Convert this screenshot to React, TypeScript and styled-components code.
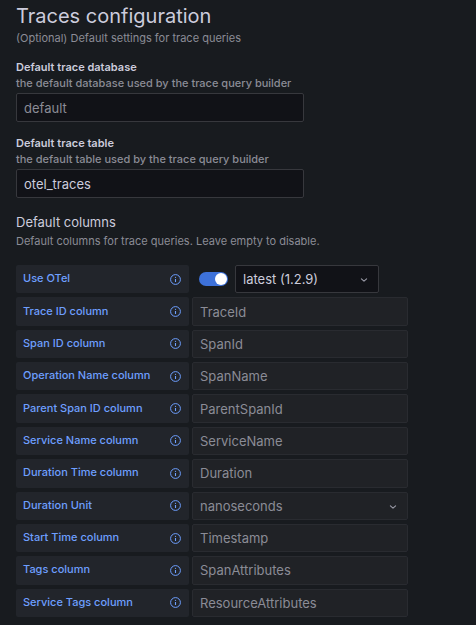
import React, { useState } from "react";
import styled, { createGlobalStyle } from "styled-components";

const color = {
  page: "#181b1f",
  field: "#111217",
  disabled: "#202226",
  label: "#22252b",
  border: "#37383d",
  faintBorder: "#292b30",
  text: "#ccccdc",
  muted: "#8b8c96",
  link: "#6e9fff",
  primary: "#3d71d9",
};

const GlobalStyle = createGlobalStyle`
  *, *::before, *::after { box-sizing: border-box; }
  body {
    margin: 0;
    background: ${color.page};
    color: ${color.text};
    font-family: Inter, "Liberation Sans", sans-serif;
    font-size: 13px;
  }
  input, select, button { font: inherit; color: inherit; margin: 0; }
`;

const Page = styled.main`
  padding: 4px 16px 8px;
`;

const Title = styled.h3`
  margin: 0;
  font-size: 20px;
  line-height: 24px;
  font-weight: 400;
`;

const Subtitle = styled.h4`
  margin: 0;
  font-size: 13px;
  line-height: 17px;
  font-weight: 400;
`;

const Description = styled.p`
  margin: 0;
  padding-top: 2px;
  font-size: 11px;
  line-height: 16px;
  color: ${color.muted};
`;

const Section = styled.section`
  margin-top: 16px;
`;

const Field = styled.div`
  display: flex;
  flex-direction: column;
  max-width: 288px;
  margin-top: 13px;
`;

const FieldLabel = styled.label`
  font-size: 11px;
  line-height: 16px;
  font-weight: 600;
`;

const FieldHint = styled.span`
  margin-bottom: 2px;
  font-size: 11px;
  line-height: 16px;
  font-weight: 500;
  color: ${color.muted};
`;

const TextInput = styled.input`
  width: 100%;
  height: 29px;
  padding: 0 7px;
  border: 1px solid ${color.border};
  border-radius: 2px;
  outline: none;
  background: ${color.field};

  &::placeholder { color: ${color.muted}; opacity: 1; }
  &:focus { border-color: ${color.primary}; }
  &:disabled {
    height: 100%;
    border-color: ${color.faintBorder};
    background: ${color.disabled};
  }
`;

const Columns = styled.div`
  display: grid;
  grid-auto-rows: 1fr;
  gap: 4px;
  max-width: 392px;
  min-height: 352px;
  margin-top: 16px;
`;

const Row = styled.div`
  display: grid;
  grid-template-columns: 173px minmax(0, 1fr);
  gap: 3px;
`;

const RowLabel = styled.label`
  display: flex;
  align-items: center;
  justify-content: space-between;
  padding: 0 8px 0 7px;
  border-radius: 2px;
  background: ${color.label};
  color: ${color.link};
  font-size: 11px;
  line-height: 16px;
  font-weight: 500;
`;

const LabelText = styled.span`
  padding-bottom: 2px;
`;

const InfoIcon = styled.svg`
  flex: none;
  width: 11px;
  height: 11px;
`;

const SwitchGroup = styled.div`
  display: flex;
  align-items: center;
  gap: 7px;
  padding-left: 7px;
`;

const Switch = styled.input`
  appearance: none;
  flex: none;
  display: flex;
  align-items: center;
  width: 29px;
  height: 14px;
  padding: 0 1px;
  border-radius: 7px;
  background: ${color.border};
  cursor: pointer;

  &::before {
    content: "";
    width: 12px;
    height: 12px;
    border-radius: 50%;
    background: #fff;
  }
  &:checked { justify-content: flex-end; background: ${color.primary}; }
`;

const SelectBox = styled.div<{ $muted?: boolean }>`
  display: grid;
  align-items: center;
  width: 100%;
  max-width: ${(p) => (p.$muted ? "none" : "144px")};
  height: 100%;
  color: ${(p) => (p.$muted ? color.muted : color.text)};

  & > * { grid-area: 1 / 1; }
`;

const Select = styled.select`
  appearance: none;
  width: 100%;
  height: 100%;
  padding: 0 24px 0 7px;
  border: 1px solid ${color.border};
  border-radius: 2px;
  background: ${color.field};

  &:disabled {
    border-color: ${color.faintBorder};
    background: ${color.disabled};
    opacity: 1;
  }
`;

const Chevron = styled.svg`
  justify-self: end;
  width: 8px;
  height: 8px;
  margin: 2px 11px 0 0;
  color: #9b9ca8;
  pointer-events: none;
`;

function Info() {
  return (
    <InfoIcon viewBox="0 0 11 11" fill="none" stroke="currentColor" aria-hidden="true">
      <circle cx="5.5" cy="5.5" r="4.9" strokeWidth="1" />
      <path d="M5.5 5v3" strokeWidth="1.1" />
      <circle cx="5.5" cy="3.3" r="0.65" fill="currentColor" stroke="none" />
    </InfoIcon>
  );
}

function Dropdown({ id, value, muted }: { id: string; value: string; muted?: boolean }) {
  return (
    <SelectBox $muted={muted}>
      <Select id={id} disabled={muted} aria-label={muted ? undefined : "OTel version"}>
        <option>{value}</option>
      </Select>
      <Chevron viewBox="0 0 8 8" fill="none" stroke="currentColor" aria-hidden="true">
        <path d="M1.4 2.8 4 5.2l2.6-2.4" strokeWidth="1.1" strokeLinecap="round" strokeLinejoin="round" />
      </Chevron>
    </SelectBox>
  );
}

const columns: { label: string; value: string; select?: boolean }[] = [
  { label: "Trace ID column", value: "TraceId" },
  { label: "Span ID column", value: "SpanId" },
  { label: "Operation Name column", value: "SpanName" },
  { label: "Parent Span ID column", value: "ParentSpanId" },
  { label: "Service Name column", value: "ServiceName" },
  { label: "Duration Time column", value: "Duration" },
  { label: "Duration Unit", value: "nanoseconds", select: true },
  { label: "Start Time column", value: "Timestamp" },
  { label: "Tags column", value: "SpanAttributes" },
  { label: "Service Tags column", value: "ResourceAttributes" },
];

export default function App() {
  const [otel, setOtel] = useState(true);
  const [table, setTable] = useState("otel_traces");

  return (
    <>
      <GlobalStyle />
      <Page>
        <Title>Traces configuration</Title>
        <Description>(Optional) Default settings for trace queries</Description>

        <Field>
          <FieldLabel htmlFor="database">Default trace database</FieldLabel>
          <FieldHint>the default database used by the trace query builder</FieldHint>
          <TextInput id="database" placeholder="default" />
        </Field>
        <Field>
          <FieldLabel htmlFor="table">Default trace table</FieldLabel>
          <FieldHint>the default table used by the trace query builder</FieldHint>
          <TextInput id="table" value={table} onChange={(e) => setTable(e.target.value)} />
        </Field>

        <Section>
          <Subtitle>Default columns</Subtitle>
          <Description>Default columns for trace queries. Leave empty to disable.</Description>
          <Columns>
            <Row>
              <RowLabel htmlFor="otel">
                <LabelText>Use OTel</LabelText>
                <Info />
              </RowLabel>
              <SwitchGroup>
                <Switch
                  id="otel"
                  type="checkbox"
                  role="switch"
                  checked={otel}
                  onChange={(e) => setOtel(e.target.checked)}
                />
                <Dropdown id="otel-version" value="latest (1.2.9)" />
              </SwitchGroup>
            </Row>
            {columns.map(({ label, value, select }) => {
              const id = label.toLowerCase().replace(/ /g, "-");
              return (
                <Row key={id}>
                  <RowLabel htmlFor={id}>
                    <LabelText>{label}</LabelText>
                    <Info />
                  </RowLabel>
                  {select ? (
                    <Dropdown id={id} value={value} muted />
                  ) : (
                    <TextInput id={id} placeholder={value} disabled />
                  )}
                </Row>
              );
            })}
          </Columns>
        </Section>
      </Page>
    </>
  );
}
